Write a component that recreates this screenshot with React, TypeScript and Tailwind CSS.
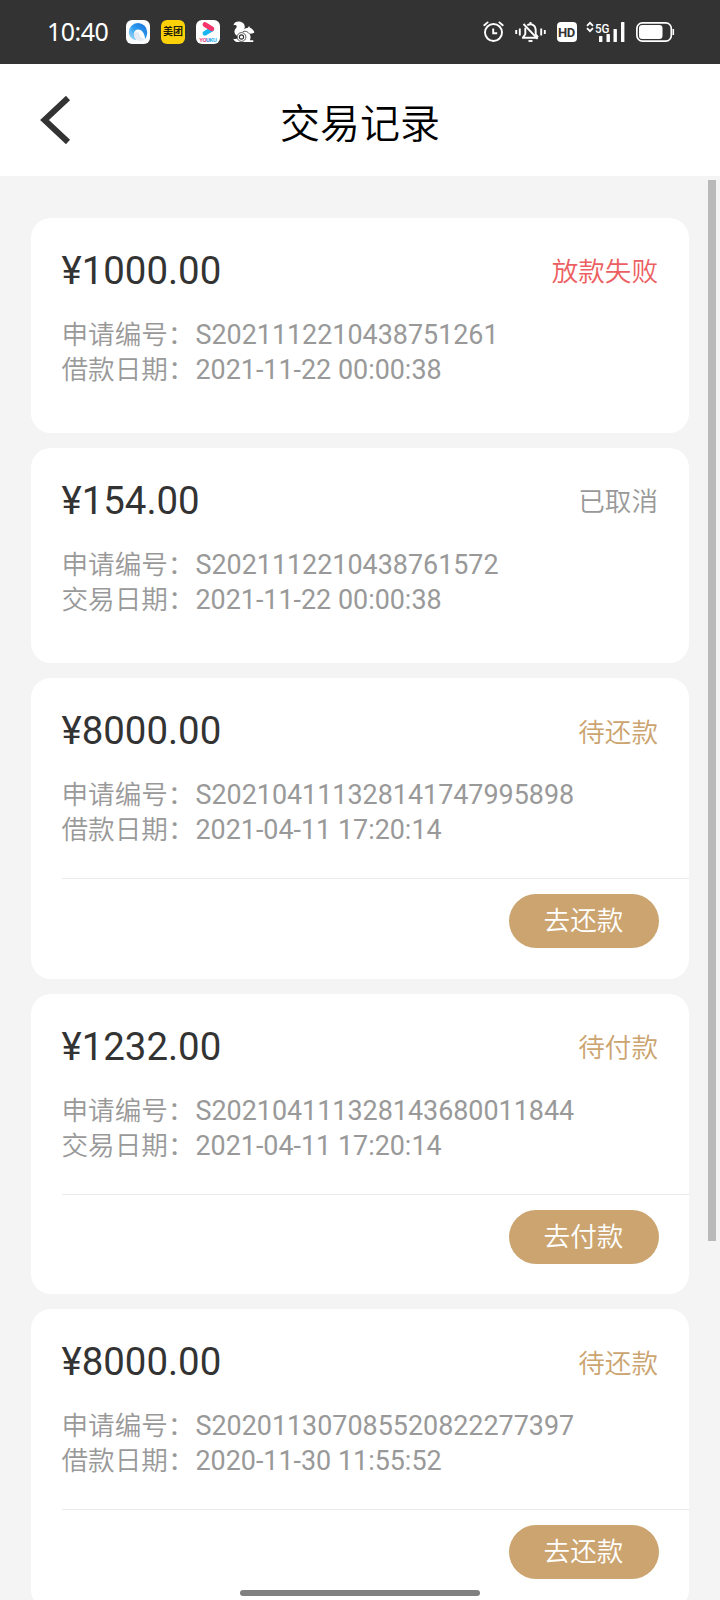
import clsx from "clsx";

interface TradeRecord {
  amount: string;
  status: string;
  tone: "failed" | "muted" | "pending";
  orderNo: string;
  dateLabel: string;
  date: string;
  action?: string;
}

const records: TradeRecord[] = [
  { amount: "1000.00", status: "放款失败", tone: "failed", orderNo: "S2021112210438751261", dateLabel: "借款日期", date: "2021-11-22 00:00:38" },
  { amount: "154.00", status: "已取消", tone: "muted", orderNo: "S2021112210438761572", dateLabel: "交易日期", date: "2021-11-22 00:00:38" },
  { amount: "8000.00", status: "待还款", tone: "pending", orderNo: "S202104111328141747995898", dateLabel: "借款日期", date: "2021-04-11 17:20:14", action: "去还款" },
  { amount: "1232.00", status: "待付款", tone: "pending", orderNo: "S202104111328143680011844", dateLabel: "交易日期", date: "2021-04-11 17:20:14", action: "去付款" },
  { amount: "8000.00", status: "待还款", tone: "pending", orderNo: "S202011307085520822277397", dateLabel: "借款日期", date: "2020-11-30 11:55:52", action: "去还款" },
];

const toneClasses = {
  failed: "text-[#ec5f63]",
  muted: "text-[#999999]",
  pending: "text-[#cba470]",
};

function BrowserIcon() {
  return (
    <svg width="24" height="24" viewBox="0 0 24 24">
      <defs>
        <linearGradient id="swirl" x1="0" y1="1" x2="1" y2="0">
          <stop offset="0" stopColor="#b5e4fb" />
          <stop offset="0.5" stopColor="#2c9df0" />
          <stop offset="1" stopColor="#1769d8" />
        </linearGradient>
      </defs>
      <rect width="24" height="24" rx="6" fill="#fafcfe" />
      <path d="M2.800 12.500a9.200 9.200 0 0 1 18.400-.5c0 2.800-.6 5.200-2 7-.5-5-2.700-9.500-7-9.500-2.700 0-4.300 1.900-4.300 4.300 0 2.200.8 4.200 2.500 6.200C5.800 19.500 2.900 16.500 2.800 12.500Z" fill="url(#swirl)" />
      <path d="M7.800 13.500c0 4 2.500 7.300 6.700 7.300 2.200 0 3.700-.7 4.700-1.800-2.800.2-4.600-1.500-5.600-4.500-.9-2.800-3.900-4-5.800-1Z" fill="#e3eaf2" />
    </svg>
  );
}

function MeituanIcon() {
  return (
    <div className="flex size-6 items-center justify-center rounded-[6px] bg-[#fdd108]">
      <span className="text-[10px] leading-none font-bold whitespace-nowrap text-[#221d08]">美团</span>
    </div>
  );
}

function YoukuIcon() {
  return (
    <svg width="24" height="24" viewBox="0 0 24 24">
      <rect width="24" height="24" rx="6" fill="#fff" />
      <path d="M9 13.200 15.800 9.200" stroke="#18b5f2" strokeWidth="4.800" strokeLinecap="round" />
      <path d="M9 4.600 15.800 8.700" stroke="#f8346b" strokeWidth="4.800" strokeLinecap="round" />
      <text x="3.200" y="22" fontSize="5.800" fontWeight="700" textLength="17.600" fontFamily="Roboto, sans-serif">
        <tspan fill="#e8477f">YO</tspan>
        <tspan fill="#3c74d8">U</tspan>
        <tspan fill="#2cb3ee">KU</tspan>
      </text>
    </svg>
  );
}

// Squirrel mark: curled tail on the left, ringed haunch, head on the right
function SquirrelIcon() {
  return (
    <svg width="22" height="22" viewBox="0 0 22 22" fill="#fff">
      <path d="M.4 4.200C1.200 1.600 3 .5 5.600.5c3.600 0 6.200 2.300 6.200 5.500 0 3.900-5 4.800-6.600 9.400C2.800 14.500 1.400 12.800 1.400 10.600c0-2.600 2.300-3.400 2.300-5.100 0-1.200-1.300-1.800-3.300-1.300Z" />
      <path d="M8.600 10.600c1.200-2.200 3.400-3.700 6.400-3.900l1-1.700 1 1.800c2.100.9 3.500 2.400 4.400 4.500-1.200 1.400-3.200 1.600-5.200 1.300 1.700 1.900 1.700 4.700.7 6.700h3.400v1.700H3.800c-1.900-.4-3-1.500-3.400-3.200 1.500.4 3 .3 4.200-.2" />
      <circle cx="8.500" cy="16" r="4.400" stroke="#333" strokeWidth=".8" />
      <circle cx="8.500" cy="16" r="2.100" fill="none" stroke="#333" strokeWidth="1.100" />
      <path d="M9.800 10.600c2.800-1 5.400.2 6.300 2.100" fill="none" stroke="#333" strokeWidth=".8" />
    </svg>
  );
}

function AlarmIcon() {
  return (
    <svg width="22" height="22" viewBox="0 0 22 22" fill="none" stroke="#fff" strokeLinecap="round">
      <circle cx="10.500" cy="11.500" r="8.500" strokeWidth="1.900" />
      <path d="M10.200 7.500v4.800h4" strokeWidth="1.900" strokeLinecap="butt" />
      <path d="M1.300 4.200 4.600 1.400M19.700 4.200 16.400 1.400" strokeWidth="1.900" />
    </svg>
  );
}

function MutedBellIcon() {
  return (
    <svg width="31" height="22" viewBox="0 0 31 22" fill="none" stroke="#fff" strokeWidth="1.900">
      <path d="M1.200 9v4M4.800 7.500v7M26.200 7.500v7M29.800 9v4" />
      <path d="M10.300 6.800v6.400L7.800 16.700h13.600M12.300 4.300c4.200-2.600 8.400.2 8.400 5v4l2.300 3" strokeLinejoin="round" />
      <path d="M15.500 3.200V1M8.500 3 22.600 17.800" />
      <path d="M13.500 20h4" />
    </svg>
  );
}

function SignalIcon() {
  return (
    <svg width="39" height="22" viewBox="0 0 39 22" fill="#fff">
      <path d="m1 4.800 3-3 3 3M1 7.200l3 3 3-3" fill="none" stroke="#fff" strokeWidth="1.900" />
      <text x="9" y="11.500" fontSize="13.500" fontWeight="500" textLength="14.500" lengthAdjust="spacingAndGlyphs" fontFamily="Roboto, sans-serif">5G</text>
      <rect x="13" y="15" width="3.400" height="6" rx=".6" />
      <rect x="20.500" y="13" width="3.400" height="8" rx=".6" />
      <rect x="27.500" y="8" width="3.400" height="13" rx=".6" />
      <rect x="35" y="1" width="3.400" height="20" rx=".6" />
    </svg>
  );
}

function BatteryIcon() {
  return (
    <svg width="39" height="20" viewBox="0 0 39 20">
      <rect x=".9" y=".9" width="34.400" height="18.200" rx="5.500" fill="none" stroke="#fff" strokeWidth="1.700" />
      <rect x="3" y="3" width="23.500" height="14" rx="3.300" fill="#fff" />
      <path d="M37.300 7v6" stroke="#fff" strokeWidth="1.600" />
    </svg>
  );
}

function StatusBar() {
  return (
    <div className="flex h-16 shrink-0 items-center bg-[#333333] pr-[45.500px] pl-[47px]">
      <span className="w-[79px] pb-[2px] font-['Noto_Sans'] text-[25px] leading-none tracking-[-0.5px] text-white">10:40</span>
      <div className="flex items-center gap-[11px]">
        <BrowserIcon />
        <MeituanIcon />
        <YoukuIcon />
        <div className="ml-0.5"><SquirrelIcon /></div>
      </div>
      <div className="ml-auto flex items-center">
        <AlarmIcon />
        <div className="ml-[10px]"><MutedBellIcon /></div>
        <div className="ml-[11px] flex h-5 w-5 items-center justify-center rounded-[4px] bg-white">
          <span className="text-[13px] leading-none font-bold tracking-[-0.3px] text-[#333333]">HD</span>
        </div>
        <div className="ml-[9px]"><SignalIcon /></div>
        <div className="ml-[11px]"><BatteryIcon /></div>
      </div>
    </div>
  );
}

function RecordCard({ record }: { record: TradeRecord }) {
  return (
    <div className={clsx("shrink-0 rounded-[20px] bg-white pl-[30.500px]", record.action ? "h-[300.300px]" : "h-[215px]")}>
      <div className="flex h-[200px] flex-col pr-[31px]">
        <div className="flex h-[99px] items-center justify-between pt-[8px]">
          <span className="pb-px text-[38.4px] leading-none text-[#333333]">¥{record.amount}</span>
          <span className={clsx("pt-[2px] text-[26.6px] leading-none font-[350]", toneClasses[record.tone])}>{record.status}</span>
        </div>
        <div className="text-[26.600px] leading-[35px] font-[350] text-[#999999]">
          <p className="h-[35px]">申请编号：<span className="ml-px text-[26.900px] leading-none font-normal">{record.orderNo}</span></p>
          <p className="h-[35px]">{record.dateLabel}：<span className="ml-px text-[26.900px] leading-none font-normal">{record.date}</span></p>
        </div>
      </div>
      {record.action && (
        <div className="flex justify-end border-t border-[#ebebeb] pt-[15px] pr-[30px]">
          <button className="flex h-[54px] w-[150px] items-center justify-center rounded-full bg-[#cba470] pr-px text-[26.6px] leading-none font-[350] text-white">
            {record.action}
          </button>
        </div>
      )}
    </div>
  );
}

export default function App() {
  return (
    <div className="relative flex h-[1600px] w-[720px] flex-col overflow-hidden bg-[#f4f4f4] font-[Roboto,'Noto_Sans_CJK_SC',sans-serif]">
      <StatusBar />

      <header className="grid h-28 shrink-0 grid-cols-[120px_1fr_120px] items-center bg-white">
        <svg className="ml-10" width="31" height="48" viewBox="0 0 31 48" fill="none" stroke="#333" strokeWidth="6">
          <path d="M28 2 4.500 24 28 46" />
        </svg>
        <h1 className="pt-[9px] text-center text-[40px] leading-none font-[350] text-black">交易记录</h1>
      </header>

      <main className="flex flex-1 flex-col gap-[15.200px] overflow-hidden px-[31px] pt-[42px]">
        {records.map((record) => (
          <RecordCard key={record.orderNo} record={record} />
        ))}
      </main>

      {/* scroll thumb */}
      <div className="absolute top-[180px] right-1 h-[1061px] w-2 bg-[#b9b9b9]" />
      {/* gesture bar */}
      <div className="absolute bottom-1 left-60 h-1.5 w-60 rounded-full bg-[#808080]" />
    </div>
  );
}
